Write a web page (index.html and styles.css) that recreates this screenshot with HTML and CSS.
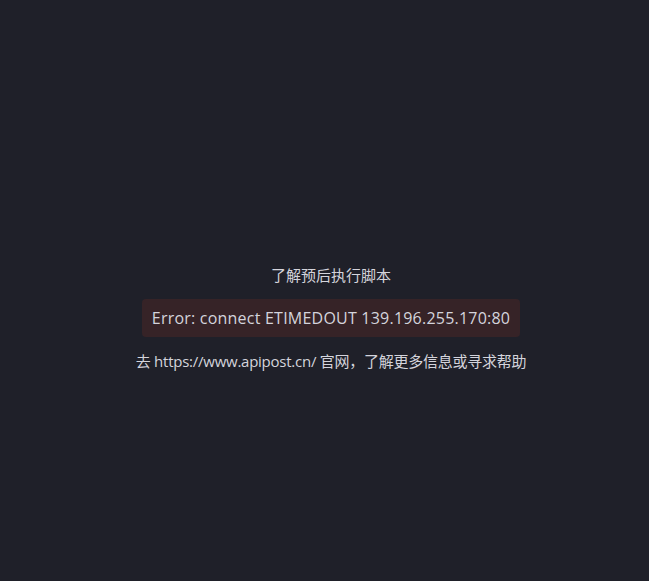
FILE: index.html
```html
<!DOCTYPE html>
<html>
<head>
<meta charset="utf-8">
<link rel="stylesheet" href="styles.css">
</head>
<body>
<div class="page">
  <div class="content">
    <div class="title">了解预后执行脚本</div>
    <div class="error">Error: connect ETIMEDOUT 139.196.255.170:80</div>
    <div class="hint">去 https://www.apipost.cn/ 官网，了解更多信息或寻求帮助</div>
  </div>
</div>
</body>
</html>
```
FILE: styles.css
```css
html, body {
  margin: 0;
  padding: 0;
  background: #1f2029;
}
.page {
  width: 649px;
  height: 581px;
  display: flex;
  flex-direction: column;
  align-items: center;
  padding-top: 265px;
  padding-left: 13px;
  box-sizing: border-box;
  font-family: "Open Sans", "Noto Sans CJK SC", sans-serif;
  color: #d4d4dc;
}
.content {
  display: flex;
  flex-direction: column;
  align-items: center;
}
.title {
  font-size: 15px;
  line-height: 20px;
}
.error {
  margin-top: 14px;
  background: #362327;
  border-radius: 4px;
  padding: 0 10px;
  height: 38px;
  line-height: 38px;
  font-size: 16px;
  letter-spacing: 0.22px;
}
.hint {
  margin-top: 14px;
  font-size: 15px;
  line-height: 20px;
  letter-spacing: -0.25px;
}
```
